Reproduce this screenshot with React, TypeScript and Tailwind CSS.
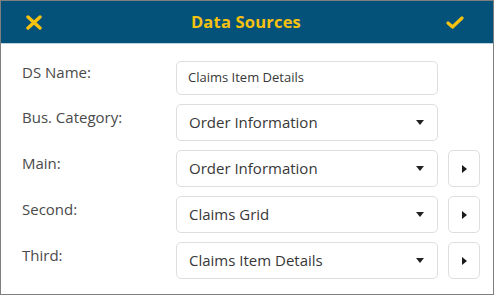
import React from 'react'

const font = { fontFamily: '"Open Sans", "Noto Sans", sans-serif' }

function CaretDown() {
  return (
    <svg width="8" height="5" viewBox="0 0 8 5" className="shrink-0 mr-[1px]">
      <path d="M0 0 H8 L4 5 Z" fill="#222" />
    </svg>
  )
}

function CaretRight() {
  return (
    <svg width="5" height="8" viewBox="0 0 5 8">
      <path d="M0 0 L5 4 L0 8 Z" fill="#1a1a1a" />
    </svg>
  )
}

function SelectRow({ label, value, arrow }: { label: string; value: string; arrow?: boolean }) {
  return (
    <div className="flex items-start">
      <div className="w-[154px] pt-[3px] text-[15px] leading-5 text-[#4a4a4a]">{label}</div>
      <div className="w-[262px] h-[37px] flex items-center justify-between pl-[12px] pr-[12px] border border-[#dedede] rounded-[5px] bg-white">
        <span className="text-[15px] text-[#383838]">{value}</span>
        <CaretDown />
      </div>
      {arrow && (
        <div className="ml-[10px] w-[32px] h-[37px] flex items-center justify-center border border-[#dedede] rounded-[5px]">
          <CaretRight />
        </div>
      )}
    </div>
  )
}

export default function App() {
  return (
    <div style={font} className="w-[494px] h-[295px] border border-[#7f7f7f] bg-white flex flex-col">
      {/* header */}
      <div className="h-[43px] bg-[#04527a] border-b border-[#bcd3e0] flex items-center justify-between px-[25px]">
        <svg width="16" height="15" viewBox="0 0 16 15">
          <path d="M2 2 L14 13 M14 2 L2 13" stroke="#f6c20f" strokeWidth="3.4" strokeLinecap="round" />
        </svg>
        <div className="text-[16.5px] font-bold text-[#f6c20f] tracking-[0.2px] ml-[4px]">Data Sources</div>
        <svg width="18" height="13" viewBox="0 0 18 13" className="mr-[4px]">
          <path d="M2 7 L6.5 11 L16 2" stroke="#f6c20f" strokeWidth="3.2" strokeLinecap="round" strokeLinejoin="round" fill="none" />
        </svg>
      </div>

      {/* form */}
      <div className="pl-[21px] pt-[17px] flex flex-col gap-[9px]">
        <div className="flex items-start">
          <div className="w-[154px] pt-[1px] text-[15px] leading-5 text-[#4a4a4a]">DS Name:</div>
          <div className="w-[262px] h-[34px] flex items-center px-[11px] border border-[#dedede] rounded-[5px]">
            <span className="text-[13px] text-[#383838]">Claims Item Details</span>
          </div>
        </div>
        <SelectRow label="Bus. Category:" value="Order Information" />
        <SelectRow label="Main:" value="Order Information" arrow />
        <SelectRow label="Second:" value="Claims Grid" arrow />
        <SelectRow label="Third:" value="Claims Item Details" arrow />
      </div>
    </div>
  )
}
